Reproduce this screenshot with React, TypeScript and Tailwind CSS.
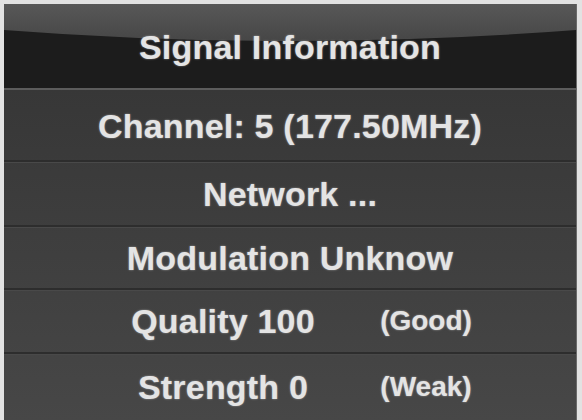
const textLook =
  "font-bold leading-none text-[#e4e4e4] [text-shadow:0_0_2px_rgba(255,255,255,0.5)]";
const rowText = `text-[34px] tracking-[0.2px] ${textLook}`;
const noteText = `text-[28px] ${textLook}`;

const Row = ({ h, children }: { h: string; children: React.ReactNode }) => {
  return (
    <div
      className={`${h} flex items-center justify-center border-t-2 border-[#2d2d2d] shadow-[inset_0_1px_0_#494949]`}
    >
      {children}
    </div>
  );
};

const App = () => {
  return (
    <div
      className="h-[420px] w-[582px] overflow-hidden bg-[#e2e2e2] pt-[4px] pl-[4px] pr-[5px]"
      style={{ fontFamily: '"Liberation Sans", Arial, sans-serif' }}
    >
      <div className="flex h-full flex-col border-r border-[#6a6a6a] bg-linear-to-b from-[#333333] to-[#474747]">
        {/* title bar */}
        <div className="relative flex h-[84px] shrink-0 items-center justify-center bg-[#1c1c1c]">
          <svg
            className="absolute inset-x-0 top-0"
            width="100%"
            height="42"
            viewBox="0 0 573 42"
            preserveAspectRatio="none"
          >
            <defs>
              <linearGradient id="gloss" x1="0" y1="0" x2="0" y2="1">
                <stop offset="0" stopColor="#585858" />
                <stop offset="1" stopColor="#464646" />
              </linearGradient>
            </defs>
            <path d="M0 0 H573 V26 Q286 48 0 26 Z" fill="url(#gloss)" />
          </svg>
          <span className={`relative mt-[2px] ${rowText}`}>Signal Information</span>
        </div>
        <div className="h-[2px] shrink-0 bg-[#5c5c5c]" />

        <div className="flex h-[70px] shrink-0 items-center justify-center pt-[2px]">
          <span className={rowText}>Channel: 5 (177.50MHz)</span>
        </div>
        <Row h="h-[65px] shrink-0">
          <span className={rowText}>Network ...</span>
        </Row>
        <Row h="h-[63px] shrink-0">
          <span className={rowText}>Modulation Unknow</span>
        </Row>
        <Row h="h-[64px] shrink-0">
          <div className="flex w-full items-center pl-[89px]">
            <span className={`w-[260px] text-center ${rowText}`}>Quality 100</span>
            <span className={`w-[146px] text-center ${noteText}`}>(Good)</span>
          </div>
        </Row>
        <Row h="flex-1">
          <div className="flex w-full items-center pl-[89px]">
            <span className={`w-[260px] text-center ${rowText}`}>Strength 0</span>
            <span className={`w-[146px] text-center ${noteText}`}>(Weak)</span>
          </div>
        </Row>
      </div>
    </div>
  );
};

export default App;
